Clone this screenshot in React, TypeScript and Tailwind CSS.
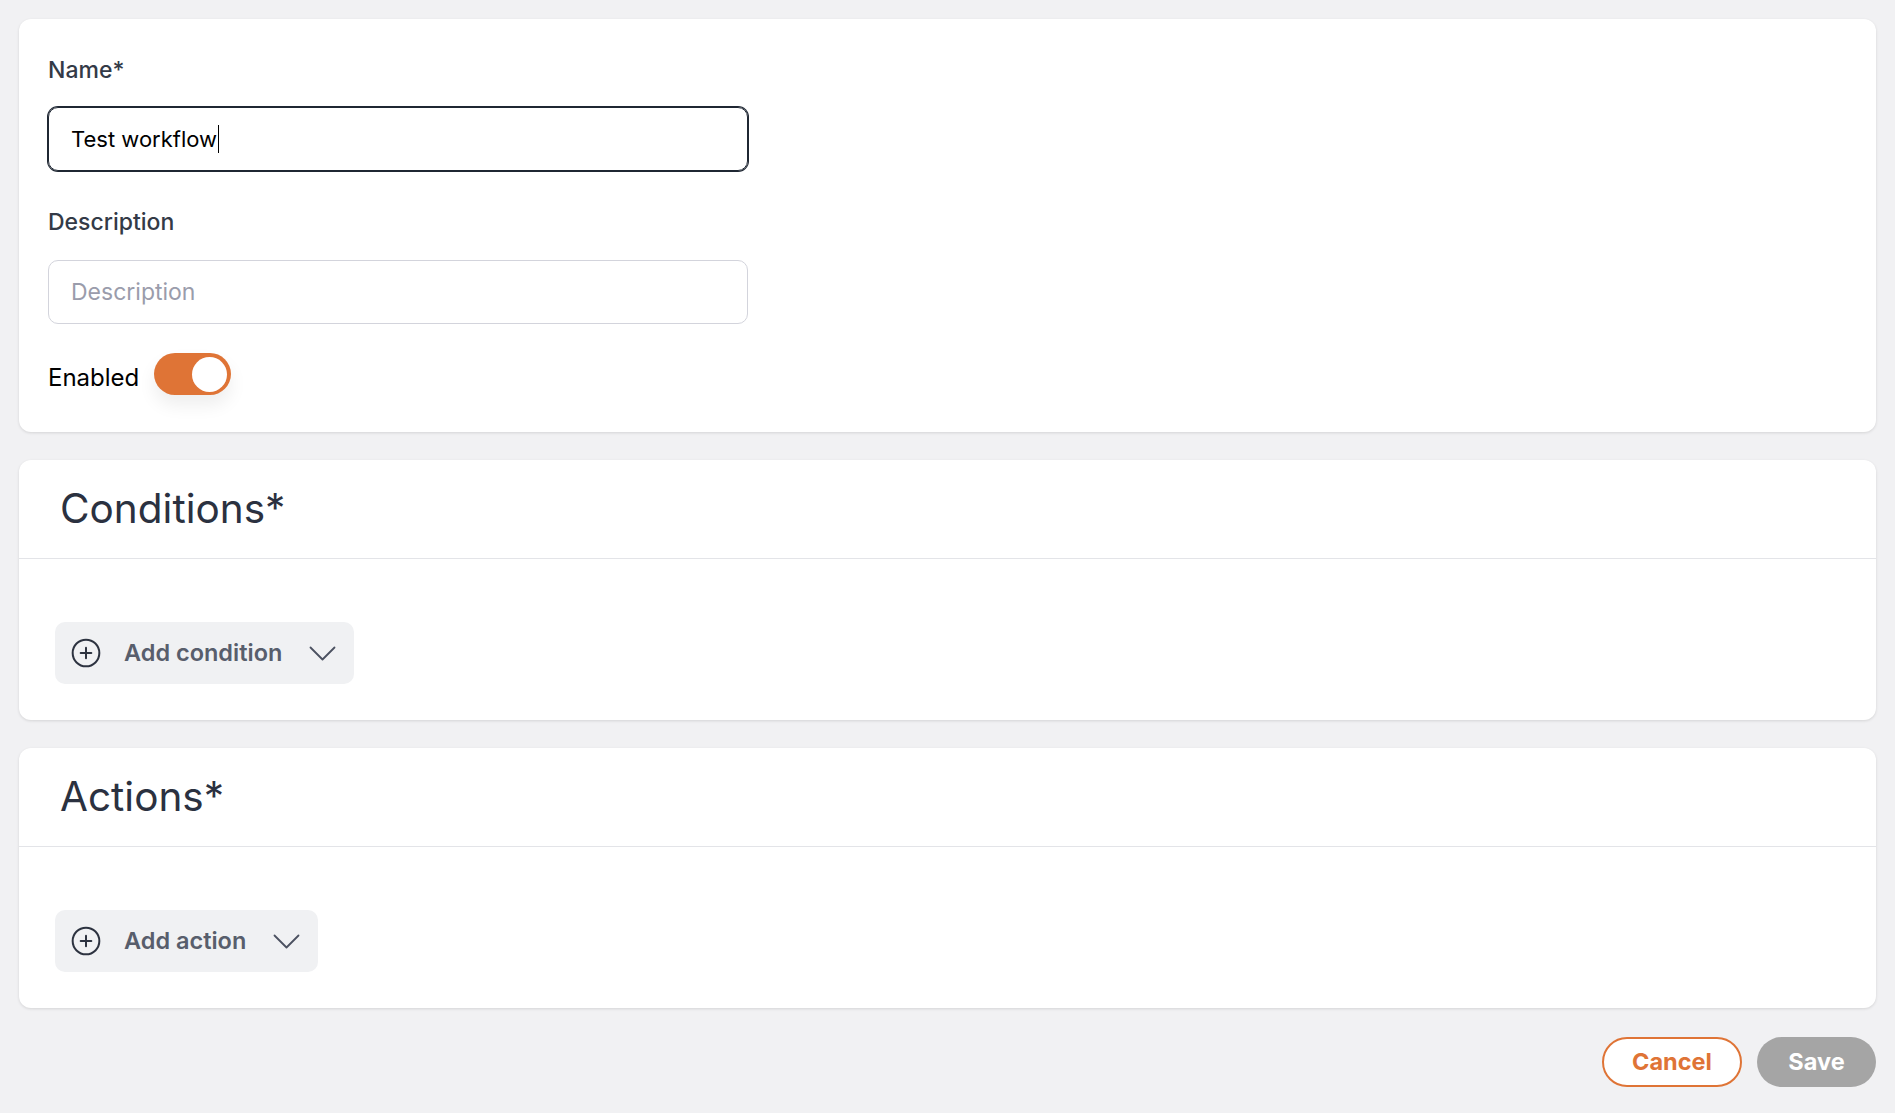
import React from "react";

const font = { fontFamily: "Inter, 'Noto Sans', sans-serif" };

function PlusCircle() {
  return (
    <svg width="32" height="32" viewBox="0 0 24 24" fill="none" stroke="#2d3340" strokeWidth="1.5" strokeLinecap="round" strokeLinejoin="round">
      <circle cx="12" cy="12" r="10" />
      <path d="M8 12h8" />
      <path d="M12 8v8" />
    </svg>
  );
}

function Chevron() {
  return (
    <svg width="27" height="15" viewBox="0 0 27 15" fill="none" stroke="#4b5161" strokeWidth="1.8" strokeLinecap="round" strokeLinejoin="round">
      <path d="M1.5 1.5 L13.5 13.5 L25.5 1.5" />
    </svg>
  );
}

function AddButton({ label }: { label: string }) {
  return (
    <button className="flex h-[62px] items-center rounded-[10px] bg-[#f0f1f3] pl-[15px] pr-[18px]">
      <PlusCircle />
      <span className="ml-[22px] text-[23.5px] font-semibold leading-[28px] text-[#585e6c]">{label}</span>
      <span className="ml-[27px] flex items-center">
        <Chevron />
      </span>
    </button>
  );
}

function Section({ title, button }: { title: string; button: string }) {
  return (
    <div className="rounded-[12px] bg-white shadow-[0_1px_3px_rgba(0,0,0,0.12)]">
      <div className="border-b border-[#e3e4e8] py-[26px] pl-[41px]">
        <h2 className="text-[40.5px] font-normal leading-[46px] text-[#2b3140]">{title}</h2>
      </div>
      <div className="pb-[36px] pl-[36px] pt-[63px]">
        <AddButton label={button} />
      </div>
    </div>
  );
}

export default function App() {
  return (
    <div className="min-h-screen bg-[#f1f1f3] px-[19px] pt-[19px]" style={font}>
      <div className="rounded-[12px] bg-white px-[29px] pb-[37px] pt-[37px] shadow-[0_1px_3px_rgba(0,0,0,0.12)]">
        <label className="block text-[23px] font-medium leading-[28px] text-[#333a47]">Name*</label>
        <div className="mt-[23px] flex h-[64px] w-[700px] items-center rounded-[10px] border border-[#1f2733] px-[22px] ring-1 ring-[#1f2733]">
          <span className="text-[22px] leading-[28px] text-black">Test workflow</span>
          <span className="ml-[1px] h-[28px] w-[1px] bg-black" />
        </div>
        <label className="mt-[37px] block text-[23px] font-medium leading-[28px] text-[#333a47]">Description</label>
        <div className="mt-[24px] flex h-[64px] w-[700px] items-center rounded-[10px] border border-[#d3d4dc] px-[22px]">
          <span className="text-[23px] leading-[28px] text-[#9a9cab]">Description</span>
        </div>
        <div className="mt-[29px] flex items-center">
          <span className="pt-[8px] text-[24px] leading-[28px] text-black">Enabled</span>
          <div className="ml-[15px] flex h-[42px] w-[77px] items-center justify-end rounded-full bg-[#df7436] pr-[4px] shadow-[0_10px_18px_rgba(0,0,0,0.07)]">
            <div className="h-[35px] w-[35px] rounded-full bg-white" />
          </div>
        </div>
      </div>

      <div className="mt-[28px]">
        <Section title="Conditions*" button="Add condition" />
      </div>
      <div className="mt-[28px]">
        <Section title="Actions*" button="Add action" />
      </div>

      <div className="mt-[29px] flex justify-end gap-[15px]">
        <button className="flex h-[50px] w-[140px] items-center justify-center rounded-full border-[2.5px] border-[#df7436] bg-white text-[23.5px] font-bold text-[#df7436]">
          Cancel
        </button>
        <button className="flex h-[50px] w-[119px] items-center justify-center rounded-full bg-[#a5a5a5] text-[23.5px] font-bold text-white">
          Save
        </button>
      </div>
    </div>
  );
}
